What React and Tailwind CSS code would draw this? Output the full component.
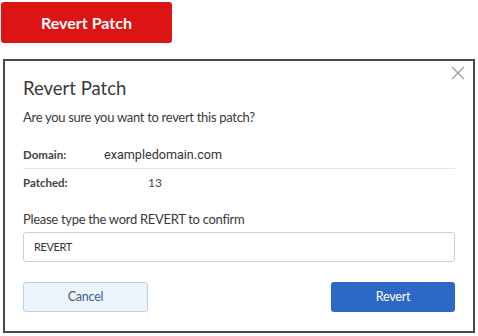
import React from "react";

export default function App() {
  const sans = { fontFamily: "Lato, 'Open Sans', sans-serif" };
  return (
    <div className="w-[478px] h-[336px] bg-white overflow-hidden" style={sans}>
      <button className="ml-[1px] mt-[2px] w-[171px] h-[41px] rounded-[3px] bg-[#dc1414] text-white text-[16px] font-bold flex items-center justify-center">
        Revert Patch
      </button>
      <div className="relative ml-[3px] mt-[16px] w-[472px] h-[274px] border-2 border-[#4a4a4a] bg-white px-[18px]">
        <button className="absolute right-[8px] top-[5px] w-[14px] h-[14px] text-[#9a9a9a]">
          <svg viewBox="0 0 14 14" className="w-[14px] h-[14px]" fill="none" stroke="currentColor" strokeWidth="1.3">
            <path d="M1 1 L13 13 M13 1 L1 13" />
          </svg>
        </button>
        <h2 className="mt-[15px] text-[18.5px] leading-[24px] text-[#3a3a3a]">Revert Patch</h2>
        <p className="mt-[8px] text-[13px] tracking-[-0.3px] leading-[18px] text-[#3a3a3a]">Are you sure you want to revert this patch?</p>
        <div className="mt-[16px] flex items-center h-[27px] border-b border-[#e6e6e6]">
          <span className="w-[81px] text-[11.5px] font-bold text-[#444]">Domain:</span>
          <span className="text-[12.6px] text-[#333]" style={{ fontFamily: "Roboto, sans-serif" }}>exampledomain.com</span>
        </div>
        <div className="flex items-center h-[27px]">
          <span className="w-[125px] text-[11.5px] font-bold text-[#444]">Patched:</span>
          <span className="text-[12px] text-[#444]">13</span>
        </div>
        <p className="mt-[14px] text-[13px] tracking-[-0.3px] leading-[18px] text-[#3a3a3a]">Please type the word REVERT to confirm</p>
        <div className="mt-[4px] h-[30px] rounded-[3px] border border-[#cfcfcf] flex items-center px-[10px] text-[11px] tracking-[-0.4px] text-[#333]">
          REVERT
        </div>
        <div className="mt-[20px] flex justify-between">
          <button className="w-[125px] h-[30px] rounded-[3px] border border-[#b9d0ee] bg-[#eef4fc] text-[12.5px] tracking-[-0.2px] text-[#3d5f94]">
            Cancel
          </button>
          <button className="w-[124px] h-[30px] rounded-[3px] bg-[#2d68c4] text-[12.5px] tracking-[-0.2px] text-white">
            Revert
          </button>
        </div>
      </div>
    </div>
  );
}
